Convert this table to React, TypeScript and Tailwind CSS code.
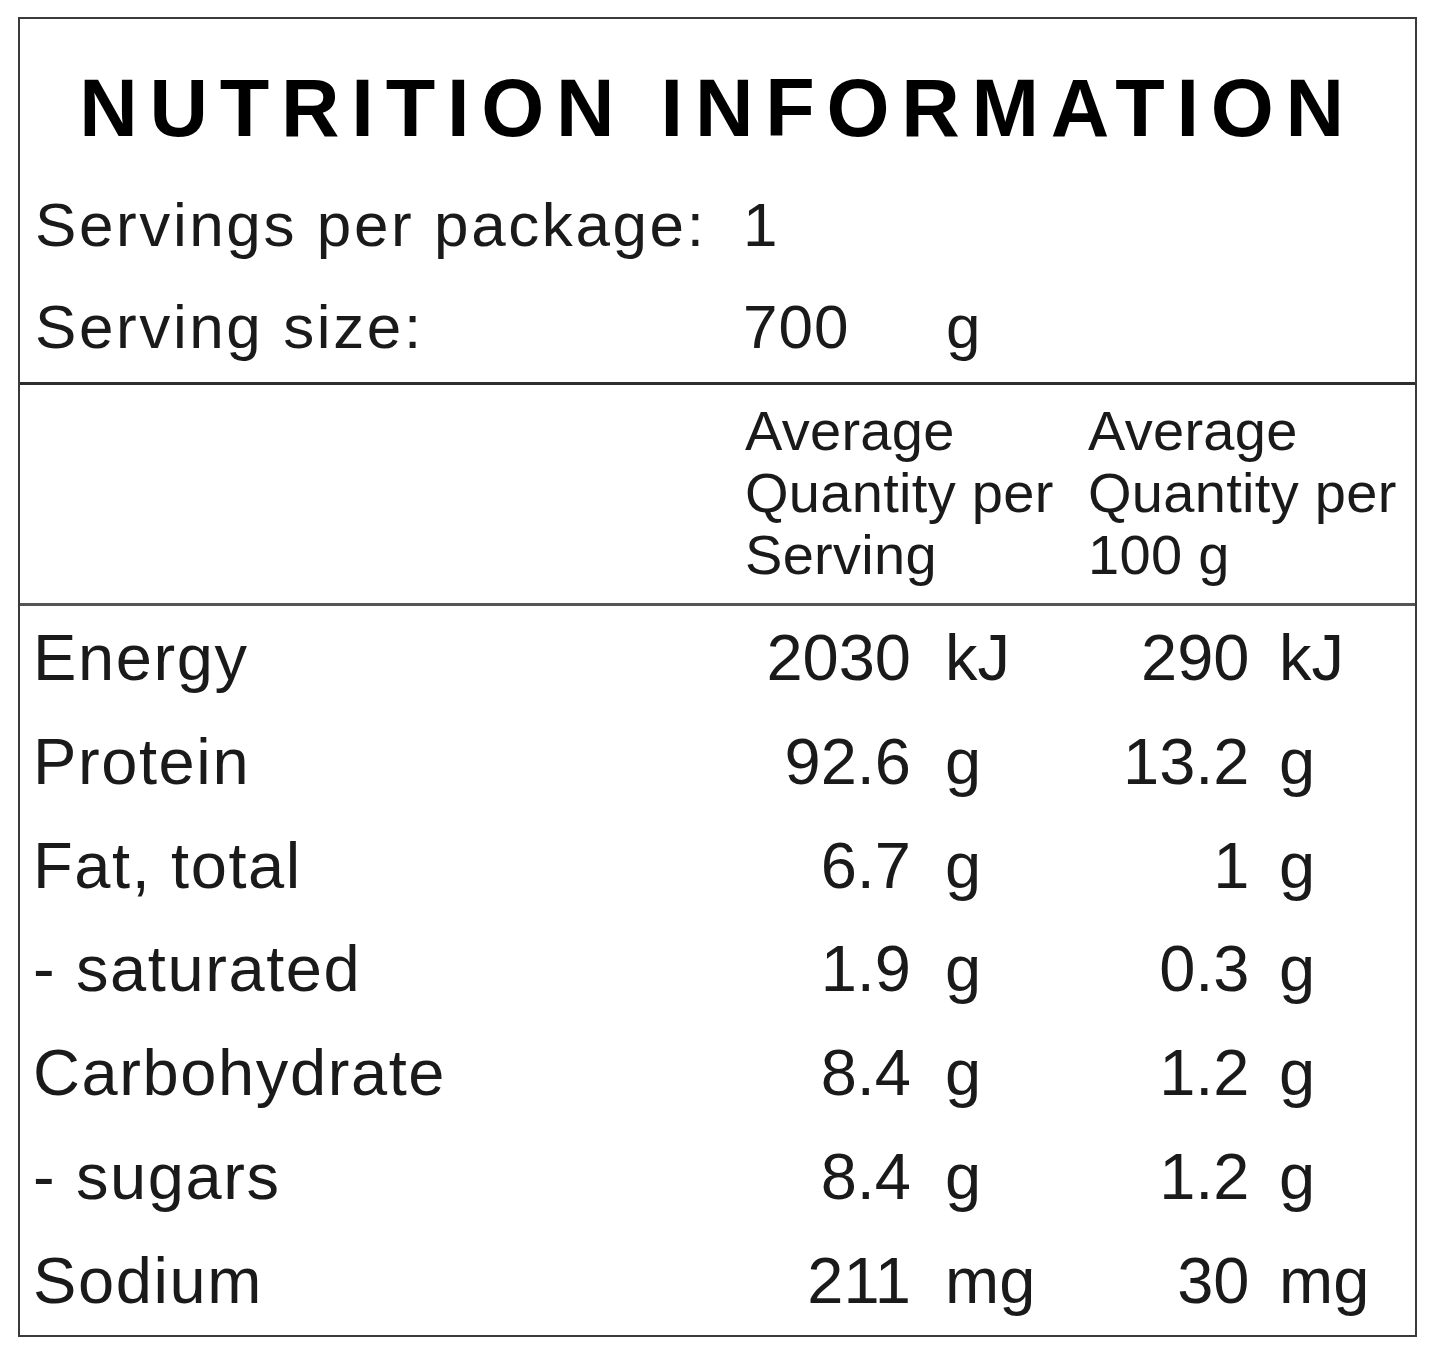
import React from "react";

const rows: { label: string; v1: string; u1: string; v2: string; u2: string }[] = [
  { label: "Energy", v1: "2030", u1: "kJ", v2: "290", u2: "kJ" },
  { label: "Protein", v1: "92.6", u1: "g", v2: "13.2", u2: "g" },
  { label: "Fat, total", v1: "6.7", u1: "g", v2: "1", u2: "g" },
  { label: "- saturated", v1: "1.9", u1: "g", v2: "0.3", u2: "g" },
  { label: "Carbohydrate", v1: "8.4", u1: "g", v2: "1.2", u2: "g" },
  { label: "- sugars", v1: "8.4", u1: "g", v2: "1.2", u2: "g" },
  { label: "Sodium", v1: "211", u1: "mg", v2: "30", u2: "mg" },
];

export default function App() {
  return (
    <div
      className="min-h-[1361px] w-full bg-white pl-[18px] pt-[17px] text-[#1a1a1a]"
      style={{ fontFamily: '"Liberation Sans", Arial, sans-serif' }}
    >
      <div className="w-[1399px] border-2 border-[#3a3a3a]">
        {/* Title + servings */}
        <div className="border-b-[3px] border-[#2e2e2e] pb-[4px]">
          <div className="pb-[25px] pt-[49px] text-center text-[81px] font-bold leading-[81px] tracking-[11.8px] text-black">
            NUTRITION INFORMATION
          </div>
          <div className="grid h-[102px] grid-cols-[707px_219px_1fr] text-[62px] leading-[102px]">
            <div className="pl-[15px] tracking-[2.6px] whitespace-nowrap">Servings per package:</div>
            <div className="pl-[16px] tracking-[1px]">1</div>
            <div></div>
          </div>
          <div className="grid h-[102px] grid-cols-[707px_219px_1fr] text-[62px] leading-[102px]">
            <div className="pl-[15px] tracking-[2.6px] whitespace-nowrap">Serving size:</div>
            <div className="pl-[16px] tracking-[1px]">700</div>
            <div>g</div>
          </div>
        </div>

        {/* Column headers */}
        <div className="grid grid-cols-[707px_345px_1fr] border-b-[3px] border-[#555] pb-[17px] pt-[15px] text-[56px] leading-[62px] tracking-[0.3px]">
          <div></div>
          <div className="pl-[18px]">
            Average
            <br />
            Quantity per
            <br />
            Serving
          </div>
          <div className="pl-[16px] whitespace-nowrap">
            Average
            <br />
            Quantity per
            <br />
            100 g
          </div>
        </div>

        {/* Nutrient rows */}
        <div className="pb-[2px]">
          {rows.map((r) => (
            <div
              key={r.label}
              className="grid h-[103.8px] grid-cols-[707px_184px_161px_177.5px_1fr] text-[65px] leading-[103.8px] whitespace-nowrap"
            >
              <div className="pl-[13px] tracking-[1.6px]">{r.label}</div>
              <div className="text-right">{r.v1}</div>
              <div className="pl-[34px]">{r.u1}</div>
              <div className="text-right">{r.v2}</div>
              <div className="pl-[29.5px]">{r.u2}</div>
            </div>
          ))}
        </div>
      </div>
    </div>
  );
}
